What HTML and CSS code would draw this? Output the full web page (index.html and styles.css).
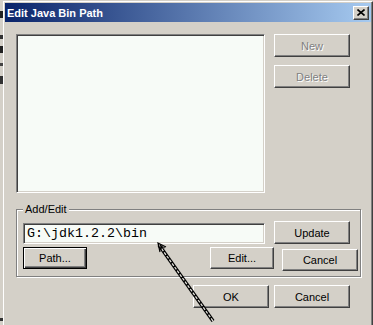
FILE: index.html
```html
<!DOCTYPE html>
<html lang="en">
<head>
    <meta charset="UTF-8">
    <title>Edit Java Bin Path</title>
    <link rel="stylesheet" href="styles.css">
</head>
<body>
    <div class="screen">
        <!-- bit of the window behind -->
        <div class="behind"></div>

        <div class="window">
            <div class="titlebar">
                <span class="title">Edit Java Bin Path</span>
                <span class="close">
                    <svg width="8" height="7" viewBox="0 0 8 7">
                        <path d="M0.5 0.5 L7.5 6.5 M7.5 0.5 L0.5 6.5" stroke="#000" stroke-width="1.6" fill="none"/>
                    </svg>
                </span>
            </div>

            <div class="dialog">
                <div class="top">
                    <div class="listbox"></div>
                    <div class="side">
                        <button class="btn btn-wide" disabled>New</button>
                        <button class="btn btn-wide" disabled>Delete</button>
                    </div>
                </div>

                <div class="group">
                    <div class="group-label">Add/Edit</div>
                    <div class="row row-first">
                        <div class="field">G:\jdk1.2.2\bin</div>
                        <button class="btn btn-wide">Update</button>
                    </div>
                    <div class="row row-second">
                        <button class="btn btn-small btn-default">Path...</button>
                        <button class="btn btn-small btn-edit">Edit...</button>
                        <button class="btn btn-wide btn-low">Cancel</button>
                    </div>
                </div>

                <div class="actions">
                    <button class="btn btn-wide">OK</button>
                    <button class="btn btn-wide">Cancel</button>
                </div>
            </div>
        </div>

        <!-- hand drawn arrow pointing at the path -->
        <svg class="arrow" width="373" height="325" viewBox="0 0 373 325">
            <line x1="159" y1="245" x2="213" y2="321" stroke="#000" stroke-width="3.6"/>
            <line x1="159" y1="245" x2="213" y2="321" stroke="#e8e6e0" stroke-width="1.2" stroke-dasharray="3 1.5"/>
            <polyline points="160,252 158,243 166,247" fill="none" stroke="#000" stroke-width="1.2"/>
            <polyline points="161.5,251 160,245.5 165,248" fill="none" stroke="#000" stroke-width="0.8"/>
        </svg>
    </div>
</body>
</html>
```

FILE: styles.css
```css
/* Basic Reset */
* {
    margin: 0;
    padding: 0;
    box-sizing: border-box;
}

body {
    font-family: "Liberation Sans", Arial, sans-serif;
    font-size: 11px;
    background-color: #d4d0c8;
    color: #000;
}

.screen {
    position: relative;
    display: flex;
    width: 373px;
    height: 325px;
    overflow: hidden;
}

/* left strip of the window behind */
.behind {
    width: 3px;
    flex-shrink: 0;
    background: linear-gradient(to bottom,
        #d4d0c8 0, #d4d0c8 11px, #222 11px, #222 18px,
        #d4d0c8 18px, #d4d0c8 35px, #333 35px, #333 39px,
        #d4d0c8 39px, #d4d0c8 46px, #222 46px, #222 53px,
        #d4d0c8 53px, #d4d0c8 63px, #444 63px, #444 66px,
        #d4d0c8 66px, #d4d0c8 76px, #333 76px, #333 84px,
        #d4d0c8 84px, #d4d0c8 318px, #333 318px, #333 321px,
        #d4d0c8 321px);
}

/* Window frame */
.window {
    flex: 1;
    margin-top: 1px;
    padding: 1px;
    border-top: 1px solid #fff;
    border-left: 1px solid #fff;
    border-right: 1px solid #404040;
    box-shadow: inset -1px 0 #808080;
}

.titlebar {
    display: flex;
    align-items: center;
    justify-content: space-between;
    height: 19px;
    padding: 0 2px;
    background: linear-gradient(to right, #0a246a, #a6caf0);
}

.title {
    color: #fff;
    font-weight: bold;
    font-size: 11px;
}

.close {
    display: flex;
    align-items: center;
    justify-content: center;
    width: 16px;
    height: 14px;
    background-color: #d4d0c8;
    border: 1px solid;
    border-color: #fff #404040 #404040 #fff;
    box-shadow: inset -1px -1px #808080;
}

/* Dialog body */
.dialog {
    padding: 12px 0 0 11px;
}

.top {
    display: flex;
    gap: 9px;
}

.listbox {
    width: 249px;
    height: 159px;
    background-color: #f7fbf7;
    border: 1px solid;
    border-color: #808080 #fff #fff #808080;
    box-shadow: inset 1px 1px #404040, inset -1px -1px #d4d0c8;
}

.side {
    display: flex;
    flex-direction: column;
    gap: 8px;
}

/* Buttons */
.btn {
    display: flex;
    align-items: center;
    justify-content: center;
    font-family: "Liberation Sans", Arial, sans-serif;
    font-size: 11px;
    color: #000;
    background-color: #d4d0c8;
    border: 1px solid;
    border-color: #fff #404040 #404040 #fff;
    box-shadow: inset -1px -1px #808080;
}

.btn:disabled {
    color: #808080;
    text-shadow: 1px 1px #fff;
}

.btn-wide {
    width: 76px;
    height: 23px;
}

.btn-small {
    width: 64px;
    height: 22px;
}

.btn-default {
    border-color: #000;
    box-shadow: inset 1px 1px #fff, inset -1px -1px #404040, inset -2px -2px #808080;
}

.btn-edit {
    margin-left: 115px;
}

.btn-low {
    height: 22px;
    margin-top: 2px;
}

/* Add/Edit group */
.group {
    width: 345px;
    height: 68px;
    margin-top: 16px;
    padding: 0 0 0 6px;
    border: 1px solid #808080;
    box-shadow: 1px 1px #fff, inset 1px 1px #fff;
}

.group-label {
    width: max-content;
    margin: -7px 0 0 0;
    padding: 0 2px;
    line-height: 13px;
    background-color: #d4d0c8;
}

.row {
    display: flex;
    align-items: flex-start;
}

.row-first {
    gap: 9px;
    margin-top: 5px;
}

.row-second {
    gap: 8px;
    margin-top: 3px;
}

.field {
    width: 242px;
    height: 21px;
    margin-top: 2px;
    padding: 2px 0 0 3px;
    font-family: "Liberation Mono", "Courier New", monospace;
    font-size: 13.33px;
    line-height: 16px;
    background-color: #f7fbf7;
    border: 1px solid;
    border-color: #808080 #fff #fff #808080;
    box-shadow: inset 1px 1px #404040, inset -1px -1px #d4d0c8;
}

/* OK / Cancel */
.actions {
    display: flex;
    gap: 5px;
    margin-top: 8px;
    padding-left: 177px;
}

.arrow {
    position: absolute;
    top: 0;
    left: 0;
    pointer-events: none;
}
```
